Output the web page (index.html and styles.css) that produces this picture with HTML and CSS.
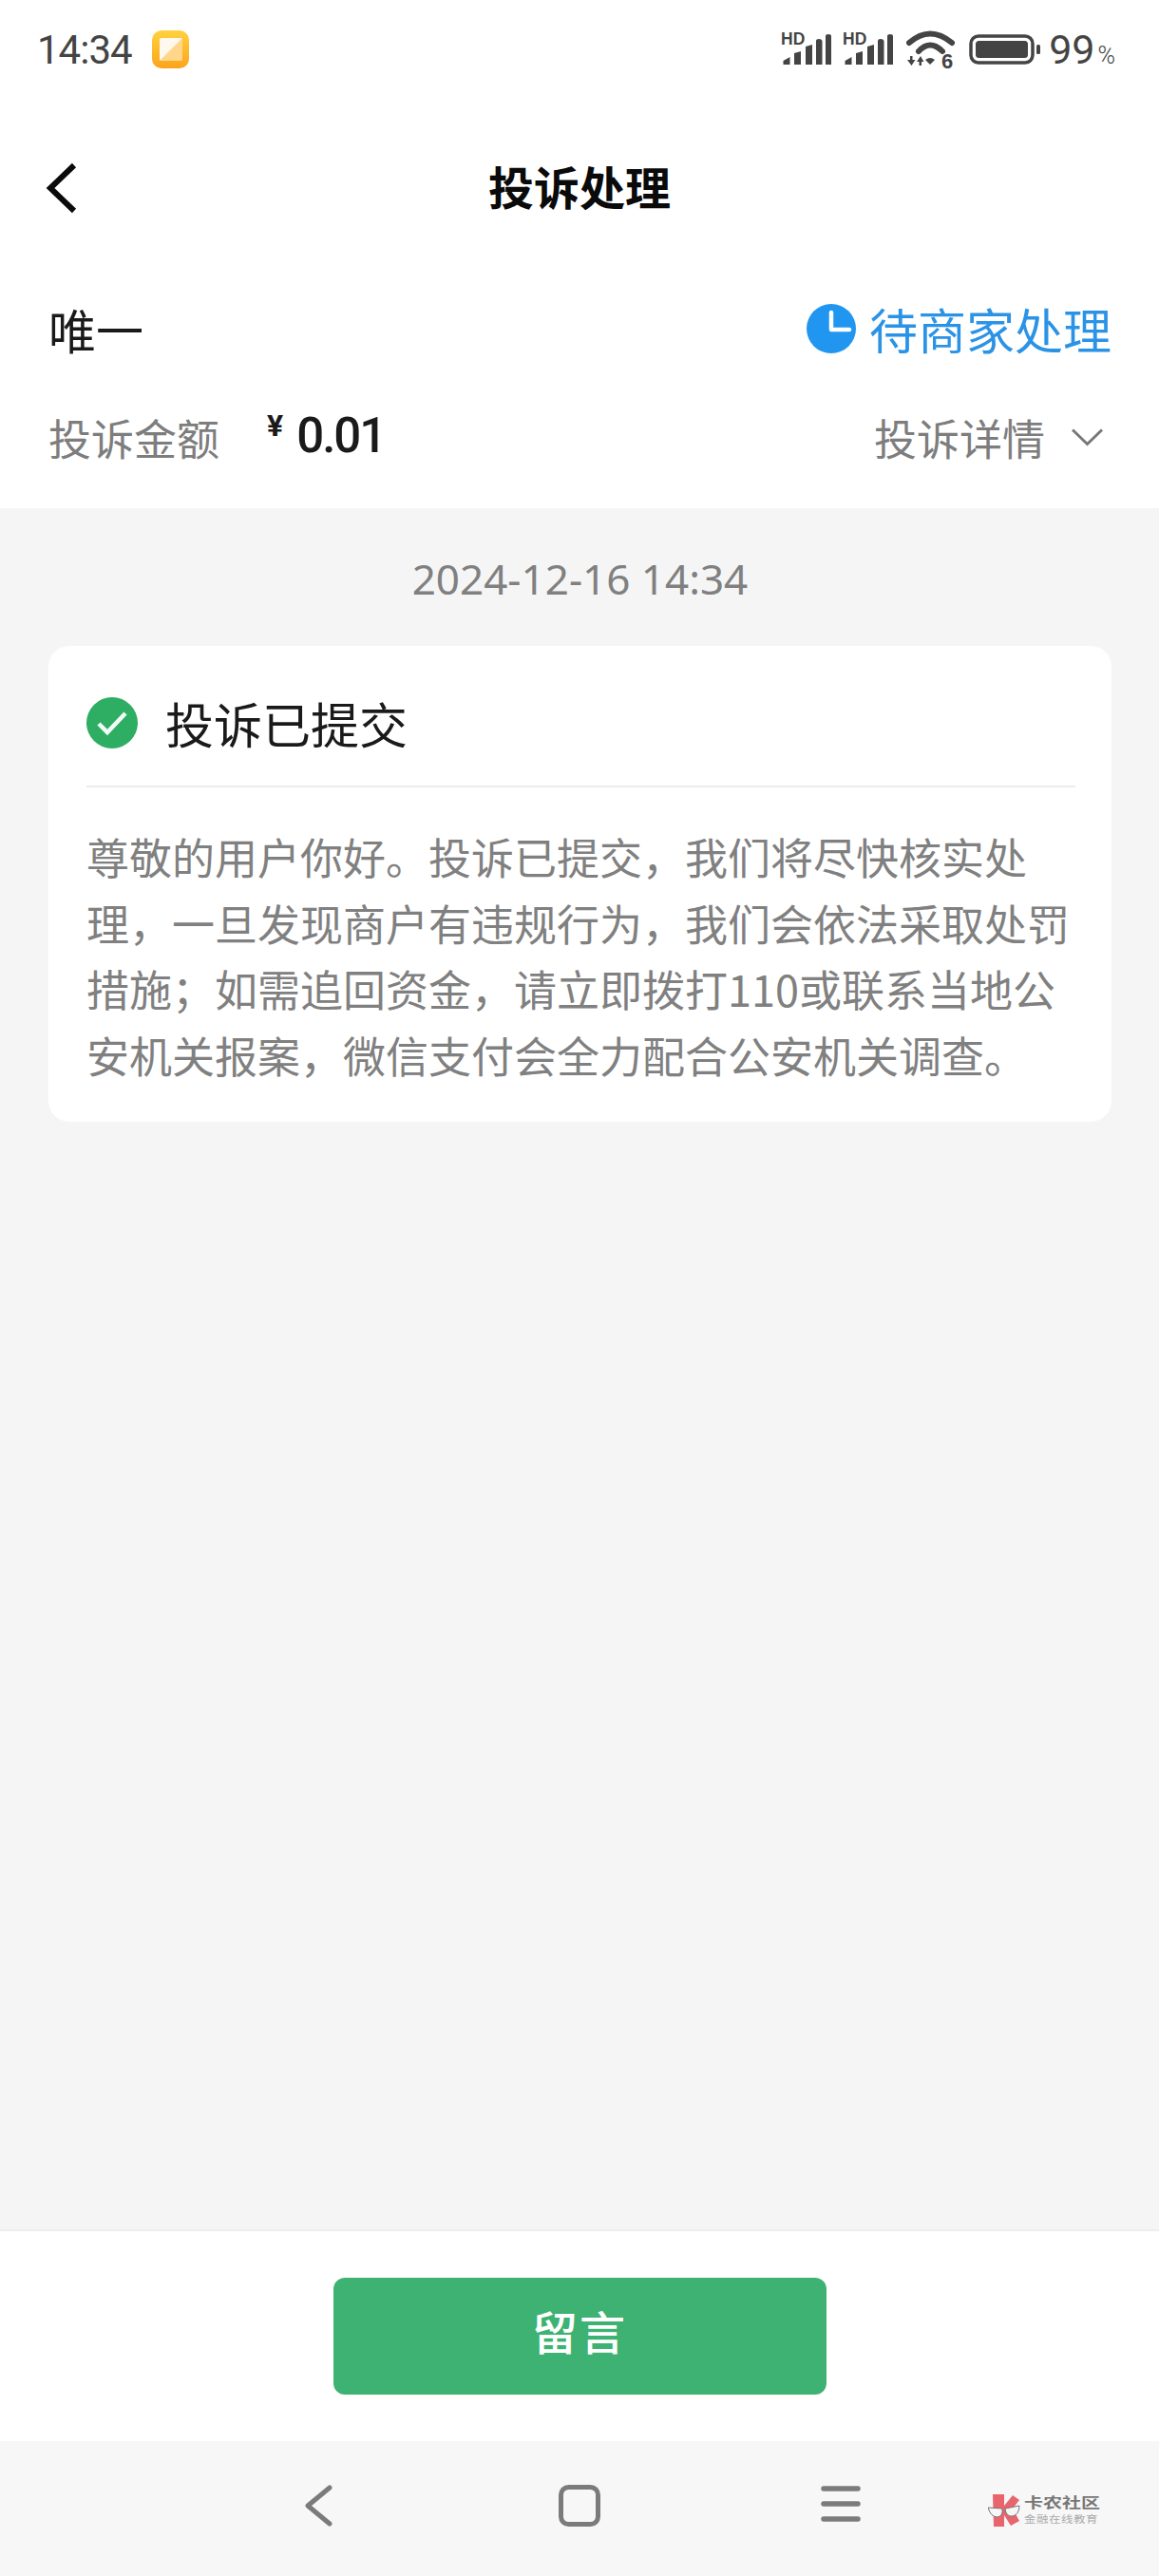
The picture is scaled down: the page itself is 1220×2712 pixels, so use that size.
FILE: index.html
```html
<!DOCTYPE html>
<html lang="zh-CN">
<head>
  <meta charset="UTF-8" />
  <meta name="viewport" content="width=device-width, initial-scale=1.0" />
  <title>投诉处理</title>
  <link rel="stylesheet" href="styles.css">
</head>
<body>
  <div class="status-bar">
    <div class="status-left">
      <span class="time">14:34</span>
      <svg class="app-icon" width="40" height="40" viewBox="0 0 40 40">
        <defs>
          <linearGradient id="appGrad" x1="0" y1="0" x2="0" y2="1">
            <stop offset="0" stop-color="#ffd23f"/>
            <stop offset="1" stop-color="#fba41c"/>
          </linearGradient>
        </defs>
        <rect width="39" height="40" rx="10" fill="url(#appGrad)"/>
        <rect x="8" y="8" width="24" height="24" rx="2" fill="#ffd68a"/>
        <path d="M8 32L32 8H10a2 2 0 0 0-2 2z" fill="#fff8ec"/>
      </svg>
    </div>
    <div class="status-right">
      <svg class="signal" width="53" height="39" viewBox="0 -4 53 39">
        <text x="0" y="14" class="hd">HD</text>
        <path d="M2.500 35v-4l7-4v8zM14 35V23l7-2v14zM26 35V16l7-2v21zM37 35V10q0-2 3-2t3.500 2v25zM47 35V5q0-2 3-2t3 2v30z"/>
      </svg>
      <svg class="signal" width="53" height="39" viewBox="0 -4 53 39">
        <text x="0" y="14" class="hd">HD</text>
        <path d="M2.500 35v-4l7-4v8zM14 35V23l7-2v14zM26 35V16l7-2v21zM37 35V10q0-2 3-2t3.500 2v25zM47 35V5q0-2 3-2t3 2v30z"/>
      </svg>
      <svg class="wifi" width="52" height="48" viewBox="0 0 52 48">
        <path d="M3 13Q25-6 48 13" fill="none" stroke="#444" stroke-width="6" stroke-linecap="round"/>
        <path d="M13 22Q25 9 38 22" fill="none" stroke="#444" stroke-width="6" stroke-linecap="round"/>
        <path d="M20 31q5-4 10 0l-5 5z"/>
        <path d="M1 31h3v-4h2.500v4h3l-4 6zM11 33l4-6 3.500 6h-2.500v4h-2.500v-4z"/>
        <text x="37" y="40" class="wifi-six">6</text>
      </svg>
      <svg class="battery" width="75" height="32" viewBox="0 0 75 32">
        <rect x="2" y="2" width="65" height="28" rx="8" fill="none" stroke="#444" stroke-width="3.500"/>
        <rect x="7" y="7" width="55" height="18" rx="3.500"/>
        <rect x="71" y="11" width="4" height="10" rx="1.500"/>
      </svg>
      <span class="battery-num">99<span class="percent">%</span></span>
    </div>
  </div>

  <div class="nav">
    <svg class="nav-back" width="36" height="54" viewBox="0 0 36 54">
      <path d="M30 3L5 27l25 24" fill="none" stroke="#0a0a0a" stroke-width="6"/>
    </svg>
    <div class="nav-title">投诉处理</div>
  </div>

  <div class="summary">
    <div class="row row-name">
      <span class="merchant">唯一</span>
      <span class="state">
        <svg width="52" height="52" viewBox="0 0 52 52">
          <circle cx="26" cy="26" r="26" fill="#2196f0"/>
          <path d="M26 9v18h19" fill="none" stroke="#fff" stroke-width="4.500" stroke-linecap="round" stroke-linejoin="round"/>
        </svg>
        <span class="state-text">待商家处理</span>
      </span>
    </div>
    <div class="row row-amount">
      <span class="amount-wrap">
        <span class="amount-label">投诉金额</span>
        <span class="amount"><span class="yen">¥</span>0.01</span>
      </span>
      <span class="detail">
        投诉详情
        <svg width="33" height="19" viewBox="0 0 33 19">
          <path d="M1 1.500l15.500 15L32 1.500" fill="none" stroke="#777" stroke-width="3"/>
        </svg>
      </span>
    </div>
  </div>

  <div class="main">
    <div class="date">2024-12-16 14:34</div>
    <div class="card">
      <div class="card-head">
        <svg width="54" height="54" viewBox="0 0 54 54">
          <circle cx="27" cy="27" r="27" fill="#2dae63"/>
          <path d="M13 28l9 9 19-20" fill="none" stroke="#f4fbf6" stroke-width="4.500"/>
        </svg>
        <span class="card-title">投诉已提交</span>
      </div>
      <p class="card-text">尊敬的用户你好。投诉已提交，我们将尽快核实处理，一旦发现商户有违规行为，我们会依法采取处罚措施；如需追回资金，请立即拨打110或联系当地公安机关报案，微信支付会全力配合公安机关调查。</p>
    </div>
  </div>

  <div class="footer">
    <button class="reply-btn">留言</button>
  </div>

  <div class="sys-nav">
    <div class="sys-slot">
      <svg width="30" height="44" viewBox="0 0 30 44">
        <path d="M27 3L4 22l23 19" fill="none" stroke="#7b7b7b" stroke-width="5" stroke-linecap="round" stroke-linejoin="round"/>
      </svg>
    </div>
    <div class="sys-slot">
      <svg width="44" height="44" viewBox="0 0 44 44">
        <rect x="2.500" y="2.500" width="39" height="39" rx="8" fill="none" stroke="#7b7b7b" stroke-width="5"/>
      </svg>
    </div>
    <div class="sys-slot">
      <svg width="42" height="40" viewBox="0 0 42 40">
        <path d="M3 4h36M3 20h36M3 36h36" fill="none" stroke="#7b7b7b" stroke-width="5.500" stroke-linecap="round"/>
      </svg>
    </div>
    <div class="watermark">
      <svg width="34" height="35" viewBox="0 0 34 35">
        <path d="M5 1h12v12L26 2l7 5-7 9 7 13-9 5-7-11v12H6z" fill="#e8656d"/>
        <path d="M0 15l15 1q1 8-5 9-7 0-10-10zM18 16l15-3q0 9-7 11-7 1-8-8z" fill="#f6f6f6" stroke="#777" stroke-width="1"/>
      </svg>
      <div class="wm-text">
        <span class="wm-name">卡农社区</span>
        <span class="wm-sub">金融在线教育</span>
      </div>
    </div>
  </div>
</body>
</html>
```

FILE: styles.css
```css
* {
  box-sizing: border-box;
}
body {
  margin: 0;
  width: 1220px;
  height: 2712px;
  display: flex;
  flex-direction: column;
  background-color: #f5f5f5;
  color: #111;
  font-family: "Noto Sans CJK SC", "Noto Sans", sans-serif;
  overflow: hidden;
}

/* status bar */
.status-bar {
  height: 104px;
  background-color: #fff;
  display: flex;
  align-items: center;
  justify-content: space-between;
  padding: 0 46px 0 39px;
  color: #444;
  fill: #444;
  font-family: Roboto, sans-serif;
}
.status-left {
  display: flex;
  align-items: center;
  gap: 21px;
}
.time {
  font-size: 42px;
  letter-spacing: -1px;
}
.status-right {
  display: flex;
  align-items: center;
}
.signal {
  margin: 0 12px 7px 0;
}
.hd {
  font-family: "Liberation Sans", sans-serif;
  font-size: 17.500px;
  font-weight: bold;
}
.wifi {
  margin: 8px 14px 0 2px;
}
.wifi-six {
  font-family: "Liberation Sans", sans-serif;
  font-size: 22px;
  font-weight: bold;
}
.battery {
  margin-right: 9px;
}
.battery-num {
  font-size: 43px;
  line-height: 1;
}
.percent {
  font-size: 25px;
  font-weight: 300;
  margin-left: 3px;
}

/* title bar */
.nav {
  height: 188px;
  background-color: #fff;
  display: flex;
  align-items: center;
  position: relative;
  padding-left: 48px;
}
.nav-title {
  position: absolute;
  left: 0;
  right: 0;
  text-align: center;
  margin-bottom: 6px;
  font-size: 48px;
  font-weight: 700;
  color: #0a0a0a;
}

/* merchant + amount */
.summary {
  height: 243px;
  background-color: #fff;
  padding: 24px 50px 0 51px;
}
.row {
  display: flex;
  align-items: center;
  justify-content: space-between;
  height: 60px;
}
.row-amount {
  margin-top: 54px;
}
.merchant {
  font-size: 50px;
  color: #1a1a1a;
}
.state {
  display: flex;
  align-items: center;
  gap: 14px;
  color: #2b93e6;
  font-size: 51px;
}
.amount-wrap {
  display: flex;
  align-items: center;
}
.amount-label,
.detail {
  font-size: 45px;
  color: #7d7d7d;
}
.amount {
  margin: -4px 0 0 50px;
  font-family: Roboto, sans-serif;
  font-size: 51px;
  font-weight: 500;
  letter-spacing: -2px;
  color: #1a1a1a;
  display: flex;
  align-items: flex-start;
}
.yen {
  font-size: 32px;
  font-weight: 700;
  margin-right: 14px;
  letter-spacing: 0;
}
.detail {
  display: flex;
  align-items: center;
  gap: 28px;
  padding-right: 9px;
}

/* timeline */
.main {
  flex: 1;
  padding: 50px 50px 0 51px;
}
.date {
  height: 48px;
  line-height: 48px;
  text-align: center;
  font-family: "Noto Sans", sans-serif;
  font-size: 44px;
  color: #808080;
}
.card {
  margin-top: 47px;
  background-color: #fff;
  border-radius: 22px;
  padding: 0 38px 36px 40px;
}
.card-head {
  height: 149px;
  padding-top: 14px;
  display: flex;
  align-items: center;
  gap: 29px;
  border-bottom: 2px solid #ececec;
}
.card-title {
  font-size: 51px;
  color: #1a1a1a;
}
.card-text {
  margin: 0;
  padding-top: 38px;
  font-size: 45px;
  line-height: 69.500px;
  color: #808080;
}

/* bottom button */
.footer {
  height: 223px;
  background-color: #fff;
  border-top: 2px solid #eeeeee;
  padding-top: 49px;
  display: flex;
  justify-content: center;
  align-items: flex-start;
}
.reply-btn {
  width: 519px;
  height: 123px;
  border: none;
  border-radius: 12px;
  padding: 0 0 13px;
  background-color: #3eb272;
  color: #fff;
  font-family: inherit;
  font-size: 48px;
  font-weight: 500;
  letter-spacing: 2px;
}

/* android nav */
.sys-nav {
  height: 142px;
  background-color: #f7f7f7;
  display: flex;
  justify-content: center;
  align-items: flex-start;
  padding-top: 46px;
  position: relative;
}
.sys-slot {
  width: 275px;
  display: flex;
  justify-content: center;
}
.watermark {
  position: absolute;
  left: 1040px;
  top: 54px;
  display: flex;
  align-items: center;
  gap: 4px;
}
.wm-text {
  display: flex;
  flex-direction: column;
}
.wm-name {
  font-size: 20px;
  line-height: 20px;
  font-weight: 700;
  color: #777;
  transform: scaleY(0.72);
}
.wm-sub {
  font-size: 12.500px;
  line-height: 16px;
  letter-spacing: 0.500px;
  color: #aaa;
  transform: scaleY(0.85);
}
```
